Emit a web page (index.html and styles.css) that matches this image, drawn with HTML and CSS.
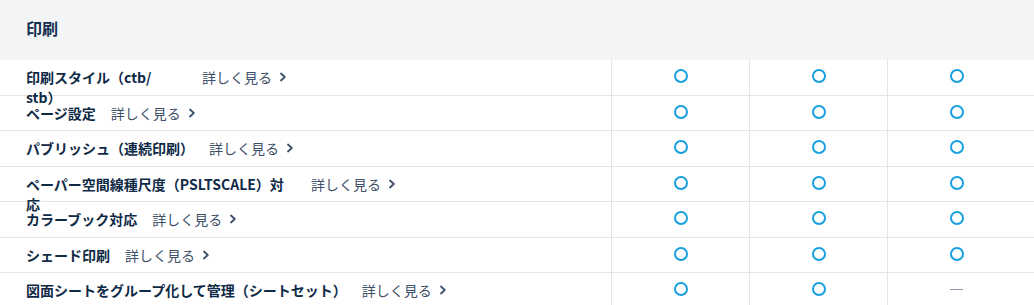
FILE: index.html
```html
<!DOCTYPE html>
<html lang="ja">
<head>
<meta charset="utf-8">
<title>印刷</title>
<link rel="stylesheet" href="styles.css">
</head>
<body>
<section class="section">
  <div class="section-head"><h2 class="section-title">印刷</h2></div>
  <div class="rows">
    <div class="row">
      <div class="feature"><span class="label w-ctb">印刷スタイル（ctb/<br>stb）</span><a class="more" href="#">詳しく見る<svg class="chev" viewBox="0 0 8 10" width="8" height="10"><path d="M2 1.5 L5.8 5 L2 8.5" /></svg></a></div>
      <div class="cell"><span class="yes"></span></div>
      <div class="cell"><span class="yes"></span></div>
      <div class="cell"><span class="yes"></span></div>
    </div>
    <div class="row">
      <div class="feature"><span class="label">ページ設定</span><a class="more" href="#">詳しく見る<svg class="chev" viewBox="0 0 8 10" width="8" height="10"><path d="M2 1.5 L5.8 5 L2 8.5" /></svg></a></div>
      <div class="cell"><span class="yes"></span></div>
      <div class="cell"><span class="yes"></span></div>
      <div class="cell"><span class="yes"></span></div>
    </div>
    <div class="row">
      <div class="feature"><span class="label">パブリッシュ（連続印刷）</span><a class="more" href="#">詳しく見る<svg class="chev" viewBox="0 0 8 10" width="8" height="10"><path d="M2 1.5 L5.8 5 L2 8.5" /></svg></a></div>
      <div class="cell"><span class="yes"></span></div>
      <div class="cell"><span class="yes"></span></div>
      <div class="cell"><span class="yes"></span></div>
    </div>
    <div class="row">
      <div class="feature"><span class="label w-psl">ペーパー空間線種尺度（PSLTSCALE）対応</span><a class="more" href="#">詳しく見る<svg class="chev" viewBox="0 0 8 10" width="8" height="10"><path d="M2 1.5 L5.8 5 L2 8.5" /></svg></a></div>
      <div class="cell"><span class="yes"></span></div>
      <div class="cell"><span class="yes"></span></div>
      <div class="cell"><span class="yes"></span></div>
    </div>
    <div class="row">
      <div class="feature"><span class="label">カラーブック対応</span><a class="more" href="#">詳しく見る<svg class="chev" viewBox="0 0 8 10" width="8" height="10"><path d="M2 1.5 L5.8 5 L2 8.5" /></svg></a></div>
      <div class="cell"><span class="yes"></span></div>
      <div class="cell"><span class="yes"></span></div>
      <div class="cell"><span class="yes"></span></div>
    </div>
    <div class="row">
      <div class="feature"><span class="label">シェード印刷</span><a class="more" href="#">詳しく見る<svg class="chev" viewBox="0 0 8 10" width="8" height="10"><path d="M2 1.5 L5.8 5 L2 8.5" /></svg></a></div>
      <div class="cell"><span class="yes"></span></div>
      <div class="cell"><span class="yes"></span></div>
      <div class="cell"><span class="yes"></span></div>
    </div>
    <div class="row">
      <div class="feature"><span class="label">図面シートをグループ化して管理（シートセット）</span><a class="more" href="#">詳しく見る<svg class="chev" viewBox="0 0 8 10" width="8" height="10"><path d="M2 1.5 L5.8 5 L2 8.5" /></svg></a></div>
      <div class="cell"><span class="yes"></span></div>
      <div class="cell"><span class="yes"></span></div>
      <div class="cell"><span class="no"></span></div>
    </div>
  </div>
</section>
</body>
</html>
```

FILE: styles.css
```css
html, body {
  margin: 0;
  padding: 0;
  background: #ffffff;
}
body {
  font-family: "Noto Sans CJK JP", "Noto Sans", sans-serif;
  color: #0f2a46;
}
.section-head {
  height: 60px;
  background: #f3f4f6;
  display: flex;
  align-items: center;
  padding-left: 26px;
  box-sizing: border-box;
}
.section-title {
  margin: 0;
  font-size: 16px;
  font-weight: 700;
  line-height: 20px;
  color: #12304d;
  padding-bottom: 4px;
}
.rows {
  display: flex;
  flex-direction: column;
}
.row {
  display: grid;
  grid-template-columns: 611px 138px 138px 138px;
  grid-template-rows: 34.5px;
  height: 35.5px;
  box-sizing: border-box;
  border-bottom: 1px solid #e3e6e9;
}
.feature {
  display: flex;
  align-items: flex-start;
  padding: 7px 0 0 26px;
  min-width: 0;
  min-height: 0;
}
.label {
  font-size: 14px;
  font-weight: 700;
  line-height: 20px;
  color: #0f2a46;
  flex: 0 0 auto;
}
.w-ctb { width: 161px; }
.w-psl { width: 270px; }
.more {
  margin-left: 15px;
  font-size: 14px;
  line-height: 20px;
  color: #3e5068;
  text-decoration: none;
  display: flex;
  align-items: center;
  white-space: nowrap;
}
.chev {
  margin-left: 7px;
  fill: none;
  stroke: #3e5068;
  stroke-width: 1.8;
  stroke-linecap: round;
  stroke-linejoin: round;
}
.cell {
  border-left: 1px solid #e3e6e9;
  display: flex;
  justify-content: center;
  align-items: center;
  min-height: 0;
}
.yes {
  width: 14px;
  height: 14px;
  box-sizing: border-box;
  border: 2px solid #18a0e0;
  border-radius: 50%;
  margin-top: -2px;
}
.no {
  width: 13px;
  height: 1.5px;
  background: #8b95a5;
  margin-top: -2px;
}
```
